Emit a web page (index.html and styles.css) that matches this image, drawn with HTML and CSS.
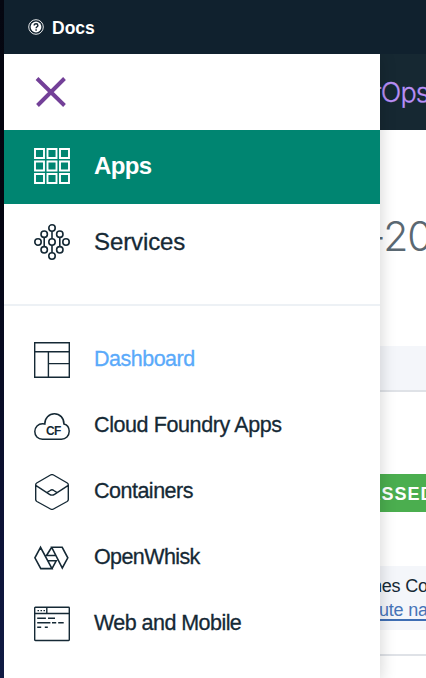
FILE: index.html
```
<!DOCTYPE html>
<html lang="en">
<head>
<meta charset="utf-8">
<title>Apps</title>
<link rel="stylesheet" href="styles.css">
</head>
<body>
<div class="window">
  <header class="topbar">
    <svg class="help" viewBox="0 0 16 16"><circle cx="8" cy="8" r="7.3" fill="none" stroke="#fff" stroke-width=".9"/><circle cx="8" cy="8" r="5.4" fill="#fff"/><path d="M6.2 6.5c0-2.5 3.7-2.3 3.7-.1 0 1.4-1.8 1.3-1.8 2.9M8.1 10.3v1.4" fill="none" stroke="#10212e" stroke-width="1.4"/></svg>
    <span>Docs</span>
  </header>
  <main class="page">
    <div class="subbar"><span>rOps</span></div>
    <h1 class="title">-20</h1>
    <div class="band"></div>
    <div class="status">ASSED</div>
    <div class="details"><div>nes Co</div><a>ute na</a></div>
    <div class="rule"></div>
  </main>
  <aside class="drawer">
    <div class="close"><svg width="32" height="32" viewBox="0 0 32 32"><path d="M2 2.500 29.500 29.500M29.500 2.500 2.500 29.500" fill="none" stroke="#734098" stroke-width="3.900"/></svg></div>
    <nav class="primary">
      <div class="item active">
        <svg class="icon" viewBox="0 0 36 36" stroke-width="1.900"><path d="M1 1h9v9H1zM13.500 1h9v9h-9zM26 1h9v9h-9zM1 13.500h9v9H1zM13.500 13.500h9v9h-9zM26 13.500h9v9h-9zM1 26h9v9H1zM13.500 26h9v9h-9zM26 26h9v9h-9z"/></svg>
        <span class="apps">Apps</span>
      </div>
      <div class="item">
        <svg class="icon" viewBox="0 0 36 36" stroke-width="1.600"><path d="M18 7.300v7.400M18 21.300v7.400M10.200 13.500v9M25.800 13.500v9"/><circle cx="18" cy="4" r="3.200"/><circle cx="18" cy="18" r="3.200"/><circle cx="18" cy="32" r="3.200"/><circle cx="10.200" cy="10.200" r="3.200"/><circle cx="25.800" cy="10.200" r="3.200"/><circle cx="10.200" cy="25.800" r="3.200"/><circle cx="25.800" cy="25.800" r="3.200"/><circle cx="4" cy="18" r="3.200"/><circle cx="32" cy="18" r="3.200"/></svg>
        <span class="services">Services</span>
      </div>
    </nav>
    <nav class="secondary">
      <div class="item current">
        <svg class="icon" viewBox="0 0 36 36" stroke-width="1.400"><path d="M.7.700h34.600v34.600H.7zM.7 9.700h34.600M14.400 9.700v25.600M14.400 21.600h21"/></svg>
        <span class="dashboard">Dashboard</span>
      </div>
      <div class="item">
        <svg class="icon" viewBox="0 0 36 36" stroke-width="1.500"><path d="M8.500 31.200C3.800 31.200.8 27.800.8 23.500c0-4.500 3.400-7.800 7.700-7.800.8 0 1.600.1 2.300.3-.2-5.800 4.300-10.300 9.600-10.300 5.400 0 9.700 4.400 9.500 10.300 3.100.8 5.300 3.700 5.300 7.300 0 4.600-3.400 7.900-7.800 7.900z"/><text x="12" y="26.600">CF</text></svg>
        <span class="cloud">Cloud Foundry Apps</span>
      </div>
      <div class="item">
        <svg class="icon" viewBox="0 0 36 36" stroke-width="1.400" stroke-linejoin="round"><path d="M16.500 1Q18 .2 19.500 1L33.300 9Q34.300 9.600 34.300 11v14.500q0 1.300-1.200 2L19.500 35q-1.500.8-3 0L2.900 27.500q-1.200-.7-1.200-2V11q0-1.400 1-2zM2.100 11.700 15.500 20.300Q18 22 20.500 20.300L33.900 11.700M13 18.700 16.200 16.500q1.800-1.500 3.600 0L23 18.700"/></svg>
        <span class="containers">Containers</span>
      </div>
      <div class="item">
        <svg class="icon" viewBox="0 0 36 36" stroke-width="1.600"><path d="M6.500 7.300.9 17.800 6.800 28.600H18zM17.700 7.300H28.200L33.800 17.800 28.300 28zM17.700 7.300 12.500 15.500H22M18 28.600 22.200 20.800H14"/></svg>
        <span class="whisk">OpenWhisk</span>
      </div>
      <div class="item">
        <svg class="icon" viewBox="0 0 36 36" stroke-width="1.400"><rect x=".7" y="1.200" width="34.600" height="33.300" rx=".7"/><path d="M.7 7.500h34.600M12.800 1.200v6.300M3.200 12.200h8.700M14 12.200h7M3.200 16.700h13.200M18 16.700h4.200M24.200 16.700h5.500M3.200 21.200h4M10.800 21.200h3M3.500 4.600H5M6.500 4.600H8M9.500 4.600H11"/></svg>
        <span class="web">Web and Mobile</span>
      </div>
    </nav>
  </aside>
</div>
</body>
</html>
```
FILE: styles.css
```
* { box-sizing: border-box; }
body {
  margin: 0;
  height: 678px;
  padding-left: 4px;
  overflow: hidden;
  background: linear-gradient(#050711, #03040f 30%, #0d1338 80%, #101b44);
  font-family: "Liberation Sans", Arial, sans-serif;
  color: #152935;
}
.window { position: relative; height: 678px; overflow: hidden; background: #fff; }
.topbar {
  display: flex;
  align-items: center;
  gap: 8px;
  height: 54px;
  padding: 2px 0 0 24px;
  background: #10212e;
  color: #fff;
  font-size: 17.500px;
  font-weight: bold;
}
.help { width: 16px; height: 16px; margin-top: -2px; }
.page { white-space: nowrap; }
.subbar {
  height: 76px;
  padding: 22px 0 0 368px;
  background: #162832;
  color: #ba8ff7;
  font: 300 27px/34px Inter, sans-serif;
  letter-spacing: -.9px;
  -webkit-text-stroke: .3px currentColor;
}
.title {
  height: 216px;
  margin: 0;
  padding: 81px 0 0 363px;
  color: #5a6872;
  font: 300 41px/50px Inter, sans-serif;
  letter-spacing: -1px;
}
.band { height: 46px; background: #f4f6fa; border-bottom: 2px solid #dfe2e7; }
.status {
  height: 38px;
  margin-top: 82px;
  padding-left: 363.500px;
  background: #4bae4f;
  color: #fff;
  font-size: 18px;
  font-weight: bold;
  line-height: 40px;
  letter-spacing: 1px;
}
.details {
  height: 64px;
  margin-top: 54px;
  padding: 9px 0 0 368px;
  background: #f4f6fa;
  font-size: 18px;
  line-height: 23px;
  letter-spacing: -.2px;
}
.details a { display: inline-block; height: 22px; margin: 1px 0 0 7px; border-bottom: 2px solid #3e6eb4; color: #4674b8; }
.rule { height: 2px; margin-top: 24px; background: #dfe2e7; }
.drawer {
  position: absolute;
  top: 54px;
  left: 0;
  width: 376px;
  height: 624px;
  background: #fff;
  box-shadow: 2px 3px 14px rgba(0, 0, 0, .15);
  clip-path: inset(0 -24px 0 0);
}
.close { height: 76px; padding: 22px 0 0 31px; }
.item { display: flex; align-items: center; gap: 24px; padding-left: 30px; white-space: nowrap; }
.icon { width: 36px; height: 36px; fill: none; stroke: #152935; }
.icon text { font-size: 12px; font-weight: bold; letter-spacing: -.6px; fill: #152935; stroke: none; -webkit-text-stroke: 0; }
.primary { height: 176px; border-bottom: 2px solid #edf1f5; font-size: 24px; }
.primary .item { height: 76px; }
.primary .item span { -webkit-text-stroke: .3px currentColor; }
.primary .active { height: 74px; padding-bottom: 2px; background: #008571; color: #fff; font-weight: bold; }
.primary .active .apps { letter-spacing: -.6px; -webkit-text-stroke: 0; }
.primary .services { letter-spacing: -.1px; }
.active .icon { stroke: #fff; }
.secondary { padding-top: 21px; font-size: 21.500px; -webkit-text-stroke: .3px currentColor; }
.secondary .item { height: 66px; }
.secondary span { padding-bottom: 1px; }
.current { color: #5aaafa; }
.dashboard { letter-spacing: -.5px; }
.cloud { letter-spacing: -.4px; }
.containers { letter-spacing: -.5px; }
.whisk { letter-spacing: -.6px; }
.web { letter-spacing: -.55px; }
```
